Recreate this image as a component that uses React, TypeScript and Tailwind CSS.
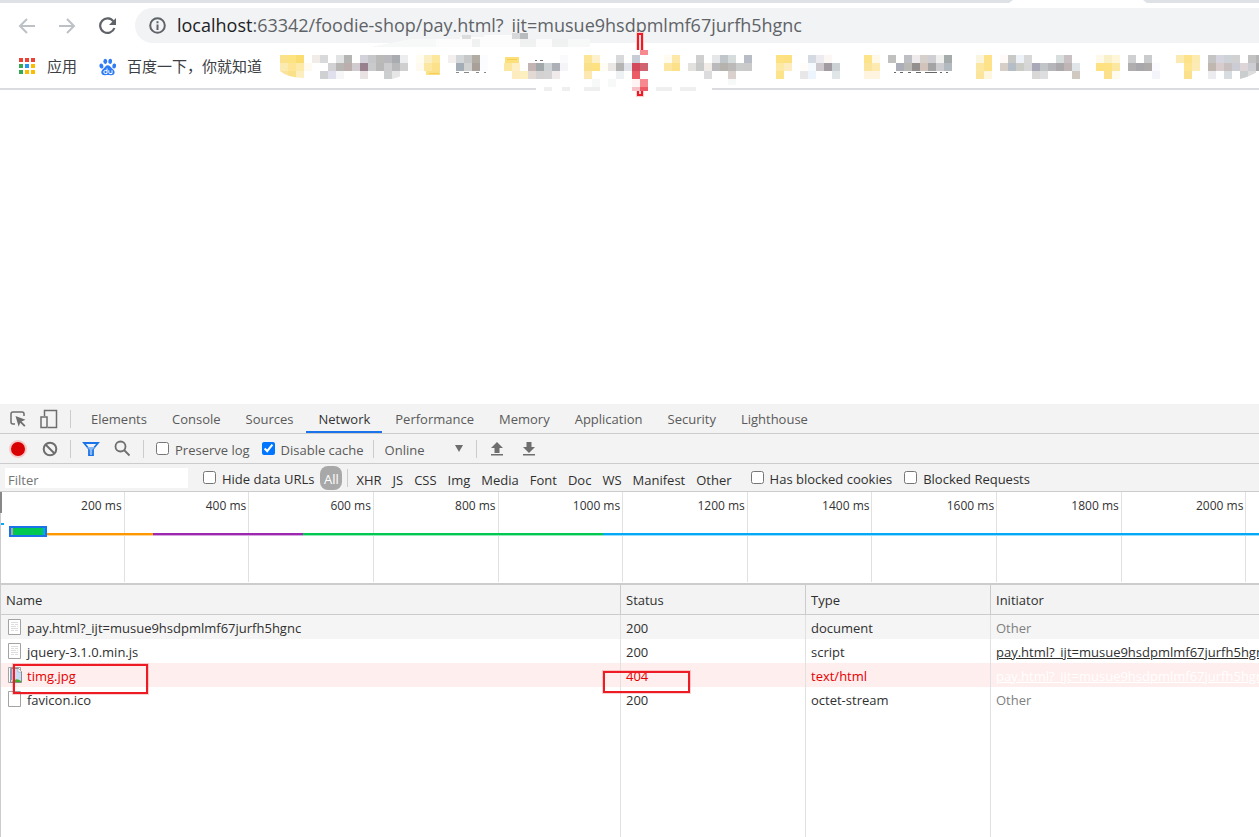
import clsx from "clsx";

// ─── Data ─────────────────────────────────────────────────────────────────────

const TABS = [
  "Elements",
  "Console",
  "Sources",
  "Network",
  "Performance",
  "Memory",
  "Application",
  "Security",
  "Lighthouse",
];

const FILTERS = ["XHR", "JS", "CSS", "Img", "Media", "Font", "Doc", "WS", "Manifest", "Other"];

const TICKS = [200, 400, 600, 800, 1000, 1200, 1400, 1600, 1800, 2000];

const PAGE = "pay.html?_ijt=musue9hsdpmlmf67jurfh5hgnc";

type Request = {
  name: string;
  status: number;
  type: string;
  initiator?: string;
  icon: "text" | "image" | "blank";
};

const REQUESTS: Request[] = [
  { name: PAGE, status: 200, type: "document", icon: "text" },
  { name: "jquery-3.1.0.min.js", status: 200, type: "script", initiator: PAGE, icon: "text" },
  { name: "timg.jpg", status: 404, type: "text/html", initiator: PAGE, icon: "image" },
  { name: "favicon.ico", status: 200, type: "octet-stream", icon: "blank" },
];

// Pixelated bookmarks: column index, then the colours of its three 8px cells
const MOSAIC: [number, string, string, string][] = [
  [0, "fbe28a", "fcebb0", "fae398"],
  [1, "fde380", "fee596", "fbe08a"],
  [2, "fbdc70", "fde9a8", "fdeec0"],
  [3, "", "fffaf0", ""],
  [4, "f2ece9", "", ""],
  [5, "d8d9da", "", "cfd0d1"],
  [6, "", "d2d2d4", "dfdfed"],
  [7, "e2e3e5", "b8b5b5", "f6f6f8"],
  [8, "b5b5b3", "bcaeac", ""],
  [9, "", "cfcbcf", ""],
  [10, "d3d2da", "98808f", "e9e2e2"],
  [11, "c6c7cb", "c9cacc", ""],
  [12, "babab8", "b8b8b8", ""],
  [13, "b9b8bc", "ccccce", "cccfd0"],
  [14, "a8acb0", "b8b8ba", "e6e6e6"],
  [15, "ecedee", "cfcfcf", ""],
  [17, "fffcf2", "fefaf0", ""],
  [18, "fceec3", "fbe7a0", ""],
  [19, "fde79c", "fde08a", ""],
  [21, "f2efee", "", ""],
  [22, "d4d7da", "a3adb7", ""],
  [23, "c6c7c8", "d0d1d1", ""],
  [24, "b0aca4", "a9a099", ""],
  [25, "fafcff", "fafcff", ""],
  [28, "", "fce7a0", ""],
  [29, "", "fef0c4", "fcecc0"],
  [30, "", "", "fcf0c0"],
  [31, "", "c2b5b3", "e2d9d4"],
  [32, "", "a0a8aa", "d3d1d2"],
  [33, "", "cdd3d4", "d5d4d5"],
  [34, "", "adb0b6", "f0ebea"],
  [35, "fafafc", "f5f5f9", ""],
  [38, "fde596", "fbe08a", "fce8b0"],
  [39, "fdf1cc", "fee180", ""],
  [40, "", "fffcf4", ""],
  [41, "", "eae7e4", ""],
  [42, "d8d9da", "b5b4b5", "edf1f4"],
  [43, "", "e0e4ea", ""],
  [44, "c8ccd6", "d24a5c", "ec5c66"],
  [45, "", "d06470", ""],
  [48, "fffbee", "fce6a0", ""],
  [49, "fde8a8", "fde08a", ""],
  [51, "", "e2e1de", ""],
  [52, "cfcfcf", "c8c9c9", ""],
  [53, "", "f1ebe8", "dcdcde"],
  [54, "e6e7e8", "bab9bb", ""],
  [55, "c0c5ca", "b6b3ae", ""],
  [56, "d6dbdb", "bcbab8", "dad0cd"],
  [57, "", "cacccb", ""],
  [58, "b8bcc6", "c9cac9", ""],
  [62, "fee180", "fde8a4", "fde48a"],
  [63, "fde180", "fcecc0", ""],
  [65, "", "fffcfa", "e9e6e7"],
  [66, "d5d9e2", "f5fafe", "ecf4fd"],
  [67, "ecebef", "ccc8cc", ""],
  [68, "fcf7f5", "a29ca2", ""],
  [69, "", "ccd1d6", "e0e5e8"],
  [73, "fde38a", "fbe49c", "fff4e0"],
  [74, "fff9ea", "fceab0", "fff4e0"],
  [76, "c0c0be", "", ""],
  [77, "", "abaeb8", ""],
  [78, "bdbfc4", "bab9b5", ""],
  [79, "efebed", "928f8e", ""],
  [80, "d5d0cb", "d2c4ba", ""],
  [81, "cfcfd3", "a4a4a4", ""],
  [82, "f0f0ee", "cdccd1", ""],
  [83, "a5aaab", "b3babf", ""],
  [87, "faf5de", "fbe7a0", "fbe49c"],
  [88, "fde28a", "fde28a", "fef6df"],
  [90, "fffaf7", "d8cec8", ""],
  [91, "c8c8c7", "b5bec6", ""],
  [92, "edf2f8", "ccccc6", ""],
  [93, "d8d8d8", "d6d6d7", ""],
  [94, "", "a9a8b8", "dad8d6"],
  [95, "", "c2c5c8", "dcdee0"],
  [96, "", "b6b5ba", ""],
  [97, "d8dddd", "aba9ac", ""],
  [98, "c9c1c4", "c0b5b5", ""],
  [99, "", "e0e5ea", "cfc9c0"],
  [102, "fff9ea", "fee180", ""],
  [103, "faf0c8", "fee180", "fbe08e"],
  [104, "fff5d8", "fce7a0", "fffbef"],
  [106, "cfd0d2", "b0aeae", ""],
  [107, "", "a8a8ac", ""],
  [108, "cacbcc", "aeaaaa", ""],
  [109, "", "fbfbff", "f3f5fb"],
  [112, "fcebb0", "", ""],
  [113, "fee28a", "fde592", "fbe08e"],
  [114, "fcebb0", "fcebb5", ""],
  [116, "c4c4c4", "c1b7b1", "ecebf0"],
  [117, "d6d4de", "d8cccc", ""],
  [118, "cdd3d6", "c8bfc0", "d6dce0"],
  [119, "d1d1d1", "cccdd4", ""],
  [120, "", "ded5d9", "cacdcd"],
  [121, "c2c2c2", "cdced3", "dcdcdc"],
  [122, "b5b5b5", "a6a6a6", ""],
];

// ─── Browser chrome ───────────────────────────────────────────────────────────

function BookmarkMosaic() {
  return (
    <svg
      className="pointer-events-none absolute top-0 right-0 left-[280px]"
      width="979"
      height="100"
      shapeRendering="crispEdges"
      aria-hidden="true"
    >
      {/* smudged strip under the address bar */}
      <path d="M130 39h180v8h-220z" fill="#f7f8f8" />
      <path d="M156 39h24v-2h24v-2h32v4h40v8h-120z" fill="#fcfcfc" />
      <path d="M192 39h8v8h-8zM240 39h16v8h-16zM272 39h16v8h-16z" fill="#f0f1f1" />
      <path d="M185 39h6v-4h-9v4z" fill="#dadcde" />
      <path d="M232 33h8v6h-8z" fill="#d6d8da" />
      <path d="M240 33h8v6h-8z" fill="#b9bcbf" />
      {/* gap in the toolbar border */}
      <path d="M256 87h176v4h-176z" fill="#fff" />
      <path d="M264 87h8v4h-8zM282 87h8v4h-8zM304 87h16v4h-16zM376 87h16v4h-16zM400 87h16v4h-16z" fill="#efefef" />
      <path d="M312 79h8v8h-8zM328 79h8v8h-8zM448 79h8v6h-8z" fill="#f7f8f8" />
      {MOSAIC.map(([col, ...cells]) =>
        cells.map(
          (fill, row) =>
            fill && (
              <rect
                key={`${col}-${row}`}
                x={col * 8}
                y={55 + row * 8}
                width="8"
                height="8"
                fill={`#${fill}`}
              />
            )
        )
      )}
      {/* rounded leftovers of the folders and of the text below them */}
      <path d="M0 71v8h24v-1q-16 0-24-7zM96 79h32v-5l-16 5z" fill="#fff" shapeRendering="auto" />
      <path d="M960 79h19v-8q-8 5-19 8z" fill="#fff" shapeRendering="auto" />
      <path d="M146 71h14v4h-14z" fill="#fbe08a" />
      <path d="M149 73h10v1h-10z" fill="#f5cf50" />
      <path d="M225 57h14v6h-14z" fill="#fde07c" />
      <path d="M227 59h10v1h-10z" fill="#f5cf50" />
      <path d="M176 72h3M184 72h5M196 72h3M204 72h2" stroke="#888" strokeWidth="1" />
      <path d="M255 60h2M260 60h3" stroke="#777" strokeWidth="1" />
      <path d="M614 72h2M620 72h3M628 72h3M636 72h5M645 72h12M660 72h2M666 72h2" stroke="#666" strokeWidth="1" />
      {/* red marker */}
      <path d="M356 50V32h8v18zM356 91h8v6h-8z" fill="#fbd0d2" />
      <path d="M358 50v-16h4v16" fill="#fbd9db" stroke="#ed1c24" strokeWidth="2" />
      <path d="M360 50h8v5h-8zM360 79h8v8h-8z" fill="#f78a90" />
      <path d="M352 79h8v8h-8z" fill="#fff3f4" />
      <path d="M352 87h8v4h-8z" fill="#f6c0c4" />
      <path d="M360 87h8v4h-8z" fill="#ed5c66" />
      <path d="M358 91v4h4v-4" fill="none" stroke="#ed1c24" strokeWidth="2" />
    </svg>
  );
}

function AppsIcon() {
  const colors = ["#ea4335", "#ea4335", "#ea4335", "#34a853", "#2196f3", "#fbbc04", "#34a853", "#fbbc04", "#fbbc04"];
  return (
    <svg width="17" height="17" aria-hidden="true" shapeRendering="crispEdges">
      {colors.map((fill, i) => (
        <rect key={i} x={(i % 3) * 6} y={Math.floor(i / 3) * 6} width="4" height="4" fill={fill} />
      ))}
    </svg>
  );
}

function BaiduIcon() {
  return (
    <svg width="18" height="18" viewBox="0 0 18 18" fill="#2f7cf6" aria-hidden="true">
      <ellipse cx="2.4" cy="8" rx="1.9" ry="2.5" transform="rotate(-15 2.4 8)" />
      <ellipse cx="6.3" cy="3.3" rx="1.9" ry="2.6" />
      <ellipse cx="11.2" cy="3.3" rx="1.9" ry="2.6" transform="rotate(10 11.2 3.3)" />
      <ellipse cx="15.2" cy="8" rx="1.9" ry="2.5" transform="rotate(10 15.2 8)" />
      <path d="M8.8 7.2c2 0 2.6 1.6 3.8 2.8 1.4 1.3 3.4 2.4 3 4.8-.4 2.2-2.3 2.6-4 2.4-1.900-.2-3.600-.2-5.500 0-1.800.2-3.500-.6-3.800-2.500-.3-2.200 1.500-3.300 2.800-4.600 1.100-1.200 1.700-2.900 3.700-2.900z" />
      <path
        d="M8 10.500v5H6.300q-1.500 0-1.500-1.500t1.500-1.500H8M9.800 12.300v2q0 1.200 1.200 1.200h2v-3.200"
        fill="none"
        stroke="#fff"
      />
    </svg>
  );
}

function BrowserChrome() {
  return (
    <header className="relative border-b-2 border-[#dadce0] bg-white">
      <div className="flex h-[3px] bg-[#dee1e6]">
        <svg className="mr-[112px] ml-auto" width="138" height="3" aria-hidden="true">
          <path d="M0 3 4 0h130l4 3z" fill="#fff" />
        </svg>
      </div>

      <div className="flex items-center pt-[5px]">
        <div className="flex w-[135px] items-center gap-[22px] pl-[18px] text-[#bdc1c6]">
          <button aria-label="Back">
            <svg className="block" width="18" height="18" fill="none" stroke="currentColor" strokeWidth="2" aria-hidden="true">
              <path d="M17 9H2.500M9 2 2 9l7 7" />
            </svg>
          </button>
          <button aria-label="Forward">
            <svg className="block" width="18" height="18" fill="none" stroke="currentColor" strokeWidth="2" aria-hidden="true">
              <path d="M1 9h14.500M9 2l7 7-7 7" />
            </svg>
          </button>
          <button aria-label="Reload" className="text-[#5f6368]">
            <svg className="block" width="19" height="18" fill="none" stroke="currentColor" strokeWidth="2.200" aria-hidden="true">
              <path d="M15.500 4.500A7.300 7.300 0 1 0 16.400 11" />
              <path d="M18 1v7h-7z" fill="currentColor" stroke="none" />
            </svg>
          </button>
        </div>
        <div className="flex h-[35px] flex-1 items-center rounded-l-full bg-[#f1f3f4] pl-[14px]">
          <svg width="17" height="17" fill="none" stroke="#5f6368" strokeWidth="2" aria-hidden="true">
            <circle cx="8.500" cy="8.500" r="7.300" />
            <path d="M8.500 7.500V13M8.500 4.200v2" />
          </svg>
          <p className="ml-[11px] text-[18px] whitespace-nowrap text-[#5f6368]">
            <span className="text-[#202124]">localhost</span>:63342/foodie-shop/pay.html?
            <span className="text-transparent">_</span>ijt=musue9hsdpmlmf67jurfh5hgnc
          </p>
        </div>
      </div>

      <nav className="flex h-[45px] items-center gap-[22px] pt-0.5 pl-[19px] text-[15px] text-[#3c4043]">
        <a href="#apps" className="flex items-center gap-[11px]">
          <AppsIcon />
          应用
        </a>
        <a href="#baidu" className="flex items-center gap-[10px]">
          <BaiduIcon />
          百度一下，你就知道
        </a>
      </nav>
      <BookmarkMosaic />
    </header>
  );
}

// ─── DevTools ─────────────────────────────────────────────────────────────────

function Divider() {
  return <span className="h-[18px] w-px bg-[#ccc]" />;
}

function CheckOption({ label, checked, className }: { label: string; checked?: boolean; className?: string }) {
  return (
    <label className={clsx("flex items-center gap-[6px] whitespace-nowrap", className)}>
      <input type="checkbox" defaultChecked={checked} className="size-[13px] accent-[#0075ff]" />
      <span className="pt-0.5">{label}</span>
    </label>
  );
}

function TabBar() {
  return (
    <div className="flex h-[30px] items-stretch border-b border-[#ccc] text-[#5a5a5a]">
      <div className="flex w-[78px] items-center pl-[10px]">
        <button aria-label="Inspect element">
          <svg className="block" width="17" height="17" fill="none" stroke="#6e6e6e" strokeWidth="1.500" aria-hidden="true">
            <path d="M5 14H3Q1 14 1 12V4q0-2 2-2h9q2 0 2 2v2" />
            <path d="m5.500 6 10 3.800-4 1.600 4 4-1.300 1.300-4-4-1.500 4z" fill="#6e6e6e" stroke="none" />
          </svg>
        </button>
        <button aria-label="Toggle device toolbar" className="ml-[13px]">
          <svg className="block" width="18" height="20" fill="none" stroke="#6e6e6e" strokeWidth="1.500" aria-hidden="true">
            <path d="M4.500 7V1.500h12v17H8" />
            <path d="M1 8h6v10.500H1z" />
          </svg>
        </button>
        <span className="ml-[12px] flex">
          <Divider />
        </span>
      </div>
      <div role="tablist" className="flex">
        {TABS.map((tab) => (
          <button
            key={tab}
            role="tab"
            aria-selected={tab === "Network"}
            className={clsx(
              "border-b-2 pt-[3px] pr-3 pl-[13px]",
              tab === "Network" ? "border-[#1a73e8] text-[#333]" : "border-transparent"
            )}
          >
            {tab}
          </button>
        ))}
      </div>
    </div>
  );
}

function Toolbar() {
  return (
    <div className="flex h-[30px] items-center border-b border-[#ccc] text-[#5a5a5a]">
      <button aria-label="Stop recording" className="ml-[9px]">
        <svg className="block" width="18" height="18" aria-hidden="true">
          <circle cx="9" cy="9" r="9" fill="#f5c9c9" />
          <circle cx="9" cy="9" r="7" fill="#d80000" />
        </svg>
      </button>
      <button aria-label="Clear" className="ml-[15px]">
        <svg className="block" width="16" height="16" fill="none" stroke="#6e6e6e" strokeWidth="2" aria-hidden="true">
          <circle cx="8" cy="8" r="6.300" />
          <path d="m3.500 3.500 9 9" />
        </svg>
      </button>
      <span className="mr-[11px] ml-[12px] flex">
        <Divider />
      </span>
      <button aria-label="Filter">
        <svg className="block" width="18" height="16" fill="none" stroke="#1a73e8" strokeWidth="1.800" aria-hidden="true">
          <path d="M2 2h14l-5 6v6H7V8z" />
          <path d="M5 6h8l-3 3v5H8V9z" fill="#8ab8f5" stroke="none" />
        </svg>
      </button>
      <button aria-label="Search" className="ml-[14px]">
        <svg className="block" width="17" height="17" fill="none" stroke="#6e6e6e" strokeWidth="1.800" aria-hidden="true">
          <circle cx="6.500" cy="6.500" r="5" />
          <path d="m10 10 5.500 5.500" />
        </svg>
      </button>
      <span className="mr-[12px] ml-[12px] flex">
        <Divider />
      </span>
      <CheckOption label="Preserve log" />
      <CheckOption label="Disable cache" checked className="ml-[12px]" />
      <span className="mr-[11px] ml-[9px] flex">
        <Divider />
      </span>
      <div className="relative flex w-[78px] items-center">
        <select aria-label="Throttling" className="w-full appearance-none bg-transparent pt-0.5">
          <option>Online</option>
        </select>
        <svg className="pointer-events-none absolute right-0" width="8" height="7" aria-hidden="true">
          <path d="M0 0h8L4 7z" fill="#6e6e6e" />
        </svg>
      </div>
      <span className="mr-[13px] ml-[13px] flex">
        <Divider />
      </span>
      <button aria-label="Import HAR file">
        <svg className="block" width="14" height="14" fill="#6e6e6e" aria-hidden="true">
          <path d="m7 0 6 6H9.500v5h-5V6H1zM1 12h12v1.500H1z" />
        </svg>
      </button>
      <button aria-label="Export HAR file" className="ml-[18px]">
        <svg className="block" width="14" height="14" fill="#6e6e6e" aria-hidden="true">
          <path d="m7 11 6-6H9.500V0h-5v5H1zM1 12h12v1.500H1z" />
        </svg>
      </button>
    </div>
  );
}

function FilterBar() {
  return (
    <div className="flex h-7 items-center border-b border-[#ccc] text-[#303030]">
      <input
        aria-label="Filter"
        placeholder="Filter"
        className="ml-[5px] h-5 w-[183px] bg-white px-[3px] pt-1 placeholder:text-[#757575]"
      />
      <CheckOption label="Hide data URLs" className="ml-[15px]" />
      <button className="ml-[6px] h-6 w-[22px] rounded-lg bg-[#a8a8a8] pt-0.5 text-white">All</button>
      <span className="mr-[8px] ml-[5px] flex">
        <Divider />
      </span>
      <div className="flex gap-[11px] pt-1">
        {FILTERS.map((filter) => (
          <button key={filter}>{filter}</button>
        ))}
      </div>
      <CheckOption label="Has blocked cookies" className="ml-[19px]" />
      <CheckOption label="Blocked Requests" className="ml-[12px]" />
    </div>
  );
}

function Timeline() {
  return (
    <div className="relative h-[91px] overflow-hidden bg-white">
      <div className="grid h-[90px] w-[99%] grid-cols-10">
        {TICKS.map((tick) => (
          <div key={tick} className="border-r border-[#e1e1e1] pt-[6px] pr-[2px] text-right text-[12px] leading-4 text-[#333]">
            {tick} ms
          </div>
        ))}
      </div>
      <div className="absolute top-0 left-0 h-full w-px bg-[#ccc]" />
      <div className="absolute top-0 left-0 h-[21px] w-[2px] bg-[#888]" />
      <div className="absolute top-[31px] left-px h-[2px] w-[3px] bg-[#03a9f4]" />
      {/* request phases */}
      <div className="absolute inset-x-0 top-[41px] flex h-[3px] pl-[46px]">
        <span className="w-[107px] border-b border-white/60 bg-[#ff9800]" />
        <span className="w-[150px] border-b border-white/60 bg-[#9c27b0]" />
        <span className="w-[300px] border-b border-white/60 bg-[#00c853]" />
        <span className="flex-1 border-b border-white/60 bg-[#03a9f4]" />
      </div>
      <div className="absolute top-[34px] left-[9px] h-[11px] w-[38px] border-2 border-[#1a73e8] bg-[#00c853]">
        <div className="h-full border-r-2 border-l-2 border-r-[#03a9f4] border-l-[#aaa]" />
      </div>
    </div>
  );
}

function FileIcon({ kind }: { kind: Request["icon"] }) {
  return (
    <svg className="block shrink-0" width="16" height="18" aria-hidden="true">
      <path d="M2.500 1.500h12v15h-12z" fill="#fff" stroke="#a3a3a3" />
      {kind === "text" && (
        <path d="M5 4.500h7M5 6.500h3m1 0h3M5 8.500h5m1 0h1M5 10.500h7M5 12.500h3m1 0h3" stroke="#ddd" />
      )}
      {kind === "image" && (
        <>
          <path d="M4.500 2.500h8l3 3v11h-11z" fill="#c8dcf5" stroke="#8c8c8c" />
          <path d="M12 2v4h4z" fill="#fff" stroke="#8c8c8c" strokeWidth=".5" />
          <path d="M4 3h2v11H4z" fill="#8f97b5" />
          <path d="M6 16q4-5 9-1v1z" fill="#3fae2a" />
        </>
      )}
    </svg>
  );
}

function RequestTable() {
  return (
    <div className="relative flex-1 overflow-hidden border-t-2 border-l border-[#ccc]">
      <table className="w-full table-fixed border-separate border-spacing-0 bg-white text-left text-[#303030]">
        <colgroup>
          <col className="w-[619px]" />
          <col className="w-[185px]" />
          <col className="w-[185px]" />
          <col />
        </colgroup>
        <thead>
          <tr className="h-[30px] bg-[#f3f3f3]">
            {["Name", "Status", "Type", "Initiator"].map((head, i) => (
              <th key={head} className={clsx("border-b border-[#ccc] px-[5px] font-normal", i > 0 && "border-l")}>
                {head}
              </th>
            ))}
          </tr>
        </thead>
        <tbody>
          {REQUESTS.map((req, i) => {
            const failed = req.status === 404;
            return (
              <tr
                key={req.name}
                className={clsx("h-6", failed ? "bg-[#ffeeee] text-[#e60000]" : i === 0 && "bg-[#f5f5f5]")}
              >
                <td className="p-0 pl-[5px]">
                  <span className="flex items-center gap-[5px]">
                    <FileIcon kind={req.icon} />
                    <span className="pt-0.5">{req.name}</span>
                  </span>
                </td>
                <td className="border-l border-[#e1e1e1] px-[5px] pt-0.5 pb-0">{req.status}</td>
                <td className="border-l border-[#e1e1e1] px-[5px] pt-0.5 pb-0">{req.type}</td>
                <td className="overflow-hidden border-l border-[#e1e1e1] pt-0.5 pb-0 pl-[5px] whitespace-nowrap">
                  {req.initiator ? (
                    <a href="#initiator" className={clsx("underline", failed && "text-white")}>
                      {req.initiator}
                    </a>
                  ) : (
                    <span className="text-[#808080]">Other</span>
                  )}
                </td>
              </tr>
            );
          })}
          <tr className="h-[126px]">
            <td />
            <td className="border-l border-[#e1e1e1]" />
            <td className="border-l border-[#e1e1e1]" />
            <td className="border-l border-[#e1e1e1]" />
          </tr>
        </tbody>
      </table>
      {/* hand-drawn highlights around the failed request */}
      <div className="absolute top-[79px] left-[12px] h-[30px] w-[135px] border-2 border-[#ed1c24] shadow-[0_0_0_1px_#ed1c2433]" />
      <div className="absolute top-[86px] left-[602px] h-[22px] w-[87px] border-2 border-[#ed1c24] shadow-[0_0_0_1px_#ed1c2433]" />
    </div>
  );
}

export default function App() {
  return (
    <div className="flex h-screen flex-col overflow-hidden bg-white font-['Open_Sans','Noto_Sans_CJK_SC',sans-serif]">
      <BrowserChrome />
      <main className="flex-1" />
      <section aria-label="DevTools" className="flex h-[433px] flex-col bg-[#f3f3f3] text-[13px] leading-4">
        <TabBar />
        <Toolbar />
        <FilterBar />
        <Timeline />
        <RequestTable />
      </section>
    </div>
  );
}
